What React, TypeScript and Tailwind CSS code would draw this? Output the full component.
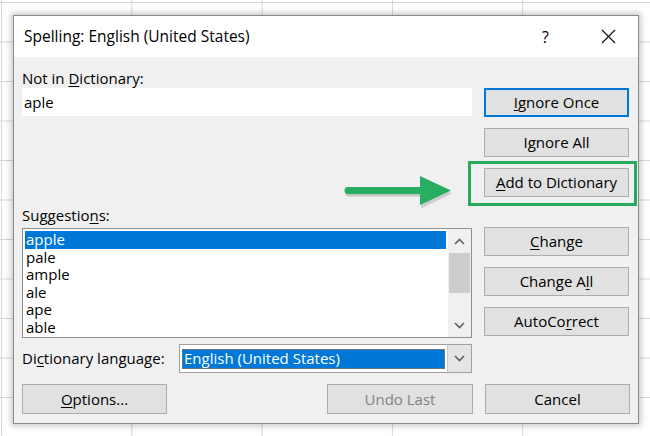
import React from "react";

const FONT = "font-['Open_Sans','Noto_Sans',sans-serif]";

function U({ children }: { children: React.ReactNode }) {
  return <span className="underline decoration-1 underline-offset-2">{children}</span>;
}

function Btn({
  children,
  focused = false,
  disabled = false,
  className = "",
}: {
  children: React.ReactNode;
  focused?: boolean;
  disabled?: boolean;
  className?: string;
}) {
  return (
    <button
      type="button"
      className={`flex h-[29px] w-[145px] items-center justify-center bg-[#e1e1e1] text-[15px] font-[450] ${
        focused ? "border-2 border-[#0078d7]" : "border border-[#adadad]"
      } ${disabled ? "text-[#838383]" : "text-black"} ${className}`}
    >
      {children}
    </button>
  );
}

function Chevron({ down = false }: { down?: boolean }) {
  return (
    <svg width="11" height="7" viewBox="0 0 11 7" fill="none">
      <path
        d={down ? "M1 1l4.5 4.5L10 1" : "M1 6l4.5-4.5L10 6"}
        stroke="#606060"
        strokeWidth="1.6"
      />
    </svg>
  );
}

const SUGGESTIONS = ["apple", "pale", "ample", "ale", "ape", "able"];

export default function App() {
  return (
    <div
      className={`h-[436px] w-[650px] overflow-hidden bg-white bg-[linear-gradient(to_right,#d6d6d6_1px,transparent_1px),linear-gradient(to_bottom,#d6d6d6_1px,transparent_1px)] bg-[size:130.3px_39.5px] bg-[position:1px_2px] pl-[13px] pt-[15px] ${FONT}`}
    >
      <div className="flex h-[409px] w-[626px] flex-col border border-[#8a8a8a] bg-[#f0f0f0] shadow-[0_0_6px_2px_rgba(0,0,0,0.22)]">
        {/* title bar */}
        <div className="flex h-[41px] shrink-0 items-center bg-white pl-[10px] text-[15.5px] font-[450] text-black">
          <span className="flex-1">Spelling: English (United States)</span>
          <span className="mr-[52px] text-[16px]">?</span>
          <svg className="mr-[22px]" width="15" height="15" viewBox="0 0 15 15">
            <path d="M1 1l13 13M14 1L1 14" stroke="#111" strokeWidth="1.2" />
          </svg>
        </div>

        {/* body */}
        <div className="flex flex-1 flex-col px-[8px] pt-[13px] text-[15px] font-[450] text-black">
          <div className="flex gap-[12px]">
            {/* left column */}
            <div className="flex w-[450px] flex-col">
              <div className="h-[17px] leading-[17px]">
                Not in <U>D</U>ictionary:
              </div>
              <div className="mt-px flex h-[28px] items-center bg-white pl-[2px]">aple</div>

              <div className="mt-[91px] h-[17px] leading-[17px]">
                Suggestio<U>n</U>s:
              </div>
              <div className="mt-[4px] flex h-[110px] border border-[#8f8f8f] bg-white">
                <div className="flex flex-1 flex-col px-[2px] pt-[2px]">
                  {SUGGESTIONS.map((s, i) => (
                    <div
                      key={s}
                      className={`h-[17.6px] pl-[1px] leading-[17.6px] ${
                        i === 0 ? "bg-[#0078d7] text-white" : ""
                      }`}
                    >
                      {s}
                    </div>
                  ))}
                </div>
                <div className="flex w-[23px] flex-col items-center bg-[#f0f0f0]">
                  <div className="flex h-[24px] items-center">
                    <Chevron />
                  </div>
                  <div className="h-[40px] w-[21px] bg-[#cdcdcd]" />
                  <div className="flex-1" />
                  <div className="flex h-[24px] items-center">
                    <Chevron down />
                  </div>
                </div>
              </div>

              <div className="mt-[6px] flex h-[29px] items-center">
                <span className="w-[157px]">
                  Di<U>c</U>tionary language:
                </span>
                <div className="flex h-[29px] flex-1 border border-[#a0a0a0] bg-white">
                  <div className="flex flex-1 items-center px-[2px]">
                    <div className="flex h-[20px] w-full items-center border border-dotted border-[#c07a30] bg-[#0078d7] pl-[1px] text-white">
                      English (United States)
                    </div>
                  </div>
                  <div className="flex w-[24px] items-center justify-center border-l border-[#c8c8c8] bg-[#e5e5e5]">
                    <Chevron down />
                  </div>
                </div>
              </div>
            </div>

            {/* right column */}
            <div className="flex flex-col pt-[18px]">
              <Btn focused>
                <U>I</U>gnore Once
              </Btn>
              <Btn className="mt-[11px]">
                I<U>g</U>nore All
              </Btn>
              <div className="relative mt-[11px]">
                <Btn>
                  <U>A</U>dd to Dictionary
                </Btn>
                <div className="absolute -left-[16px] -right-[8px] -top-[7px] -bottom-[9px] border-[3px] border-[#27a95e]" />
                <svg
                  className="absolute -left-[140px] top-[6px]"
                  width="110"
                  height="34"
                  viewBox="0 0 110 34"
                >
                  <path
                    d="M4 17.5h74"
                    stroke="rgba(0,0,0,0.18)"
                    strokeWidth="7"
                    strokeLinecap="round"
                    transform="translate(1 1.5)"
                  />
                  <path d="M76 3l31 15-31 15z" fill="rgba(0,0,0,0.15)" transform="translate(1 1.5)" />
                  <path d="M4 16.5h74" stroke="#27ae60" strokeWidth="7" strokeLinecap="round" />
                  <path d="M76 2l31 14.5L76 31z" fill="#27ae60" />
                </svg>
              </div>
              <Btn className="mt-[30px]">
                <U>C</U>hange
              </Btn>
              <Btn className="mt-[11px]">
                Change A<U>l</U>l
              </Btn>
              <Btn className="mt-[11px]">
                AutoCo<U>r</U>rect
              </Btn>
            </div>
          </div>

          {/* bottom buttons */}
          <div className="mt-[11px] flex h-[30px] items-center">
            <Btn className="h-[30px]">
              <U>O</U>ptions...
            </Btn>
            <Btn disabled className="ml-auto h-[30px] w-[146px]">
              Undo Last
            </Btn>
            <Btn className="ml-[12px] h-[30px]">Cancel</Btn>
          </div>
        </div>
      </div>
    </div>
  );
}
